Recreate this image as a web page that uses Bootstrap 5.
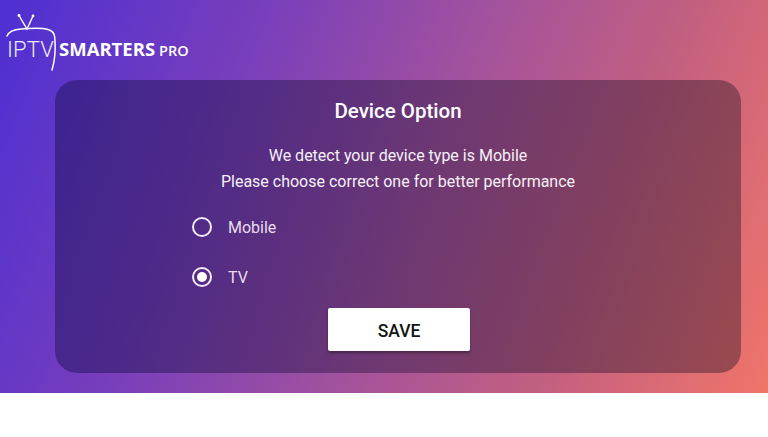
<!DOCTYPE html>
<html lang="en">
<head>
<meta charset="utf-8">
<title>Device Option</title>
<link href="https://cdn.jsdelivr.net/npm/bootstrap@5.3.0/dist/css/bootstrap.min.css" rel="stylesheet">
<style>
html,body{height:100%;background:#fff;margin:0;overflow:hidden}
body{font-family:Roboto,"Liberation Sans",sans-serif}
.hero{height:393px;background:linear-gradient(112deg,#4d2fd3 0%,#7a3fba 30%,#a0519f 52%,#c4607f 76%,#f0756a 100%);position:relative;padding:80px 27px 20px 55px}
.logo-wrap{position:absolute;left:5px;top:13px;width:190px;height:60px;color:#fff}
.logo-wrap svg{position:absolute;left:0;top:0}
.logo-iptv{position:absolute;left:2px;top:25px;font-size:22px;font-weight:300;line-height:24px;letter-spacing:.2px;opacity:.9}
.logo-name{position:absolute;left:54px;top:24px;font-size:18.5px;font-weight:700;line-height:24px;font-family:"Open Sans",sans-serif;white-space:nowrap}
.logo-pro{font-size:14.5px;font-weight:600;margin-left:4px}
.panel{height:293px;border-radius:22px;background:linear-gradient(100deg,rgba(42,25,110,.62),rgba(58,30,72,.5) 55%,rgba(75,35,50,.5));color:#fff}
.ttl{font-size:20.5px;font-weight:500;line-height:24px;padding-top:19px;margin:0}
.sub{font-size:16px;line-height:26px;color:#f6f0f6;margin-top:20px}
.opts{padding-left:137px;margin-top:8px}
.opt{height:50px;gap:16px;font-size:16px;color:#eadcec}
.rad{width:20px;height:20px;border:2px solid #f4e9f6;border-radius:50%;margin-top:-2px;flex:none;position:relative}
.rad.on::after{content:"";position:absolute;left:3px;top:3px;width:10px;height:10px;border-radius:50%;background:#fff}
.save{width:142px;height:43px;background:#fff;color:#141414;border:0;border-radius:2px;font-size:17.5px;font-weight:500;box-shadow:0 2px 3px rgba(0,0,0,.35);padding:3px 0 0;margin:5px 0 0 2px}
.save:hover{background:#fff;color:#141414}
</style>
</head>
<body>
<div class="hero">
  <div class="logo-wrap">
    <svg width="60" height="60" viewBox="0 0 60 60" fill="none" stroke="#fff">
      <path d="M14 2.500 L22 16 L28 3" stroke-width="1.4"/>
      <circle cx="14" cy="2.500" r="1.400" fill="#fff" stroke="none"/>
      <circle cx="28" cy="3" r="1.400" fill="#fff" stroke="none"/>
      <path d="M2 23 C4 18 10 16.500 16 16 C26 15 37 14.500 43 16.500 C49 18 50 22 50 28 C50.500 36 50 47 47 57" stroke-width="1.500" stroke-linecap="round"/>
    </svg>
    <span class="logo-iptv">IPTV</span>
    <span class="logo-name">SMARTERS<span class="logo-pro">PRO</span></span>
  </div>
  <div class="panel text-center">
    <h1 class="ttl">Device Option</h1>
    <div class="sub">We detect your device type is Mobile<br>Please choose correct one for better performance</div>
    <div class="opts text-start">
      <div class="opt d-flex align-items-center"><span class="rad"></span><span>Mobile</span></div>
      <div class="opt d-flex align-items-center"><span class="rad on"></span><span>TV</span></div>
    </div>
    <button type="button" class="btn save">SAVE</button>
  </div>
</div>
</body>
</html>
